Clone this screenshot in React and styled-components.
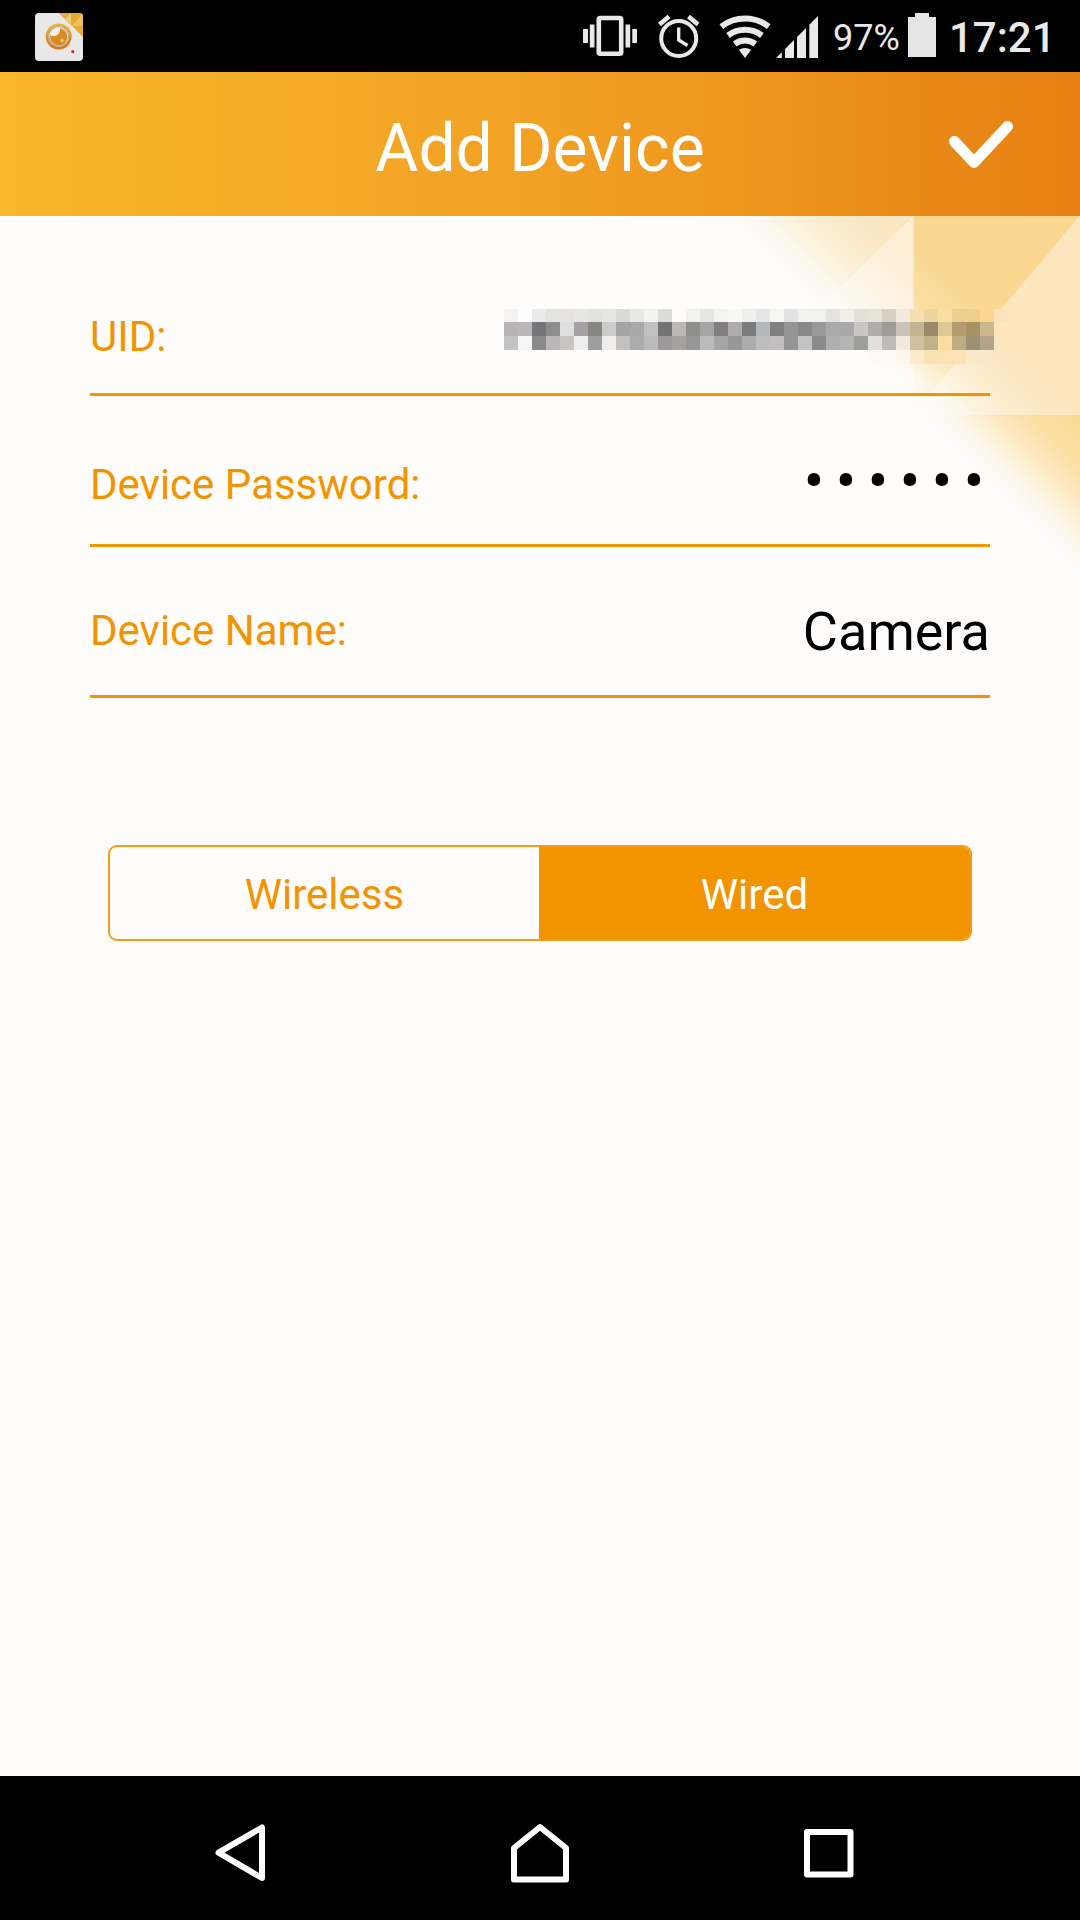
import React, { useState } from "react"
import styled, { createGlobalStyle } from "styled-components"

const GlobalStyle = createGlobalStyle`
  * {
    box-sizing: border-box;
  }
  body {
    margin: 0;
    background: #000;
    font-family: Roboto, "Liberation Sans", sans-serif;
  }
`

// censored uid, one row of colors per line of blocks
const uidBlocks = [
  "f4f3f2 fefefe e9eaea e3e3e2 e4e3e2 e6e6e4 e3e2e0 e6e6e4 dadad8 e8e8e7 f2f2f1 dcdcda fefdfb f2f2f1 e5e5e3 f3f3f1 f8f8f6 efefee e5e5e5 f6f6f5 e2e2e4 f2f2f0 f2f2f0 e5e3e1 f2ede7 e4dfd9 e9e2d8 d9d0c4 f3e9dd f4dfb3 eed59c f8dea4 eed08e eed08c fdd68f fae3b8",
  "b8b5b7 b9b7b9 757577 8f8c8e dedede a5a2a5 888683 cccccc a3a4a4 a9a9ab bfc0c0 757375 bab9b5 8f8e8b a5a5a5 817e80 aeabae 7a7b7d b6b7b8 827f82 959694 8b888b 989998 a9aaa9 a8a9a8 c8c7c1 b1aca7 a09b96 cbc4ba c4b38f 998a6b dec894 b39d6e aa9264 ccb88e",
  "c3c3c4 f6f6f7 8b898b b9b7b9 c7c6c4 efeeed 9d9e9f efeeed c1c0be aaabad bbbbba 9b999c a3a29f 989699 babab9 a4a5a6 989699 acacad bebcbf c0bec1 959593 c2c3c4 8c898c aeafae b4b4b3 9d9d9c e4dfda bebab5 f2e9df cfc0a1 c1b08a fbdca0 beab7e 9b9174 b1a488",
  "- - - - - - - - - - - - - - - - - - - - - - - - - - fffaf5 fffaf3 fef7ee fbeacb fae1b0 fce2b1 fbe3b5 fbe9c8 fbe8c9",
].map((row) => row.split(" "))

const AppIcon = () => (
  <svg width="48" height="48" viewBox="0 0 48 48">
    <defs>
      <clipPath id="tile">
        <rect width="48" height="48" rx="4" />
      </clipPath>
      <linearGradient id="ring" x1="0" y1="0" x2="0" y2="1">
        <stop offset="0" stopColor="#efb12c" />
        <stop offset="1" stopColor="#d9731d" />
      </linearGradient>
    </defs>
    <g clipPath="url(#tile)">
      <rect width="48" height="48" fill="#e9e8e8" />
      <path d="M24 0H48V24Z" fill="#e8ab2c" />
      <path d="M24 0H36V12Z" fill="#dfac4a" />
      <path d="M36 0V12L30 6Z" fill="#edca83" />
      <path d="M48 0V13H37Z" fill="#ecc069" />
    </g>
    <circle cx="23.7" cy="23.5" r="11.7" fill="#f2f2f2" stroke="url(#ring)" strokeWidth="2.6" />
    <circle cx="23.7" cy="23.3" r="9.8" fill="none" stroke="#a9a9a6" strokeWidth="1.2" />
    <circle cx="23.7" cy="23.6" r="8.6" fill="#dc8a1d" />
    <path d="M15.5 21C16 17 20 14.5 25 15C26 20 22 24 16 23Z" fill="#f4f1ec" />
    <circle cx="27" cy="27.5" r="1.8" fill="#edbd7a" />
    <circle cx="37.8" cy="38.7" r="1.6" fill="#d8262c" />
  </svg>
)

const VibrateIcon = () => (
  <svg width="54" height="42" viewBox="0 0 54 42" fill="#e9e9e9">
    <rect x="0" y="14" width="5" height="14" />
    <rect x="6.8" y="9.5" width="4.7" height="23" />
    <rect x="42.5" y="9.5" width="4.7" height="23" />
    <rect x="49.3" y="14" width="4.7" height="14" />
    <rect x="15.8" y="3" width="22.4" height="35.8" rx="1.5" fill="none" stroke="#e9e9e9" strokeWidth="4.6" />
  </svg>
)

const AlarmIcon = () => (
  <svg width="42" height="44" viewBox="0 0 42 44" fill="none" stroke="#e9e9e9">
    <circle cx="20.7" cy="24.5" r="17.5" strokeWidth="4" />
    <path d="M20.7 13.5V26L29.5 31.5" strokeWidth="3.4" />
    <path d="M1.5 10.5L11 2.5M30.5 2.5L40 10.5" strokeWidth="4.6" />
  </svg>
)

const WifiIcon = () => (
  <svg width="52" height="44" viewBox="0 0 52 44" fill="none" stroke="#e9e9e9" strokeWidth="6">
    <path d="M2.3 12.6A38.8 38.8 0 0 1 49.7 12.6" />
    <path d="M9.1 21.5A27.8 27.8 0 0 1 42.9 21.5" />
    <path d="M15.7 30A17 17 0 0 1 36.3 30" />
    <path d="M26 44L19.9 36A10 10 0 0 1 32.1 36Z" fill="#e9e9e9" stroke="none" />
  </svg>
)

const SignalIcon = () => (
  <svg width="42" height="42" viewBox="0 0 42 42" fill="#e9e9e9">
    <path d="M0 42L5.8 36.2V42ZM9 42V33L18 24V42ZM21 42V21L30 12V42ZM33.3 42V8.7L42 0V42Z" />
  </svg>
)

const BatteryIcon = () => (
  <svg width="28" height="44" viewBox="0 0 28 44" fill="#e5e5e5">
    <path d="M7 0H21V4H28V44H0V4H7Z" />
  </svg>
)

const Corner = () => (
  <CornerArt width="380" height="384" viewBox="0 0 380 384">
    <defs>
      <linearGradient id="fade" gradientUnits="userSpaceOnUse" x1="20" y1="0" x2="102" y2="-82">
        <stop offset="0" stopColor="#fff" stopOpacity="0" />
        <stop offset="0.2" stopColor="#fff" stopOpacity="0.16" />
        <stop offset="0.45" stopColor="#fff" stopOpacity="0.55" />
        <stop offset="0.7" stopColor="#fff" stopOpacity="0.85" />
        <stop offset="1" stopColor="#fff" />
      </linearGradient>
      <mask id="corner-mask" maskUnits="userSpaceOnUse" x="0" y="0" width="380" height="384">
        <rect width="380" height="384" fill="url(#fade)" />
      </mask>
    </defs>
    <g mask="url(#corner-mask)">
      <path d="M0 0H213.5L100 112Z" fill="#fae6bf" />
      <path d="M213.5 0V200H13Z" fill="#fdeed5" />
      <path d="M213.5 0H380L213.5 198Z" fill="#fad892" />
      <path d="M380 0V199H213L213.5 198Z" fill="#fbe6bd" />
      <path d="M180 199H380V384Z" fill="#fad890" />
    </g>
  </CornerArt>
)

const UidMosaic = () => (
  <Mosaic width="504" height="55" viewBox="0 0 504 55" shapeRendering="crispEdges">
    {uidBlocks.map((row, y) =>
      row.map((color, x) =>
        color === "-" ? null : (
          <rect
            key={`${x}-${y}`}
            x={x * 14}
            y={y === 0 ? 0 : y * 14 - 1}
            width="14"
            height={y === 0 ? 13 : 14}
            fill={`#${color}`}
          />
        )
      )
    )}
  </Mosaic>
)

const App = () => {
  const [mode, setMode] = useState("Wired")

  return (
    <Screen>
      <GlobalStyle />
      <StatusBar>
        <AppIcon />
        <StatusIcons>
          <VibrateIcon />
          <AlarmIcon />
          <WifiIcon />
          <SignalIcon />
          <Percent>97%</Percent>
          <BatteryIcon />
          <Clock>17:21</Clock>
        </StatusIcons>
      </StatusBar>

      <Header>
        <span />
        <Title>Add Device</Title>
        <Confirm aria-label="Confirm">
          <svg width="64" height="50" viewBox="0 0 64 50">
            <path
              d="M5.5 21.5L25 42.5L58.5 6.5"
              fill="none"
              stroke="#fff"
              strokeWidth="11"
              strokeLinecap="round"
              strokeLinejoin="round"
            />
          </svg>
        </Confirm>
      </Header>

      <Content>
        <Corner />
        <Form>
          <Row $height={180} $bottom={31}>
            <Label>UID:</Label>
            <UidMosaic />
          </Row>
          <Row $height={151} $bottom={34}>
            <Label>Device Password:</Label>
            <Password>••••••</Password>
          </Row>
          <Row $height={151} $bottom={39}>
            <Label>Device Name:</Label>
            <Value>Camera</Value>
          </Row>
        </Form>
        <Toggle>
          {["Wireless", "Wired"].map((item) => (
            <ToggleButton
              key={item}
              $active={mode === item}
              onClick={() => setMode(item)}
            >
              {item}
            </ToggleButton>
          ))}
        </Toggle>
      </Content>

      <NavBar>
        <svg width="50" height="58" viewBox="0 0 50 58">
          <path d="M47 3.5V54L3.5 28.7Z" />
        </svg>
        <svg width="58" height="60" viewBox="0 0 58 60">
          <path d="M3 56.5V25L29 4L55 25V56.5Z" />
        </svg>
        <svg width="50" height="49" viewBox="0 0 50 49">
          <rect x="3" y="3" width="43.5" height="42.5" />
        </svg>
      </NavBar>
    </Screen>
  )
}

const Screen = styled.div`
  display: flex;
  flex-direction: column;
  width: 1080px;
  height: 1920px;
  overflow: hidden;
`

const StatusBar = styled.div`
  display: flex;
  justify-content: space-between;
  height: 72px;
  padding: 13px 30px 0 35px;
  background: #000;
  color: #e9e9e9;
`

const StatusIcons = styled.div`
  display: flex;
  align-items: flex-start;

  svg {
    flex: none;
  }
  svg:nth-of-type(1) {
    margin: 2px 21px 0 0;
  }
  svg:nth-of-type(2) {
    margin: 1px 19px 0 0;
  }
  svg:nth-of-type(3) {
    margin: 1px 5px 0 0;
  }
  svg:nth-of-type(4) {
    margin: 3px 0 0;
  }
`

const Percent = styled.span`
  width: 90px;
  padding-left: 15px;
  font-size: 36px;
  line-height: 50px;
`

const Clock = styled.span`
  width: 114px;
  padding-left: 13px;
  font-size: 42px;
  font-weight: 500;
  line-height: 49px;
`

const Header = styled.header`
  display: grid;
  grid-template-columns: 180px 1fr 180px;
  align-items: center;
  height: 144px;
  background: linear-gradient(90deg, #f9b62c, #f4a927 31%, #ee981e 68%, #e98916 85%, #e88113);
`

const Title = styled.h1`
  margin: 0;
  padding-top: 9px;
  color: #fff;
  font-size: 66px;
  font-weight: 400;
  line-height: 78px;
  text-align: center;
`

const Confirm = styled.button`
  display: flex;
  width: 64px;
  margin-left: 49px;
  padding: 1px 0 0;
  border: 0;
  background: none;
`

const Content = styled.main`
  position: relative;
  flex: 1;
  background: #fefdfc;
`

const CornerArt = styled.svg`
  position: absolute;
  top: 0;
  right: 0;
`

const Form = styled.div`
  position: relative;
  padding: 0 90px;
`

const Row = styled.div`
  display: flex;
  align-items: flex-end;
  justify-content: space-between;
  height: ${(props) => props.$height}px;
  padding-bottom: ${(props) => props.$bottom}px;
  border-bottom: 3px solid #f29400;
`

const Label = styled.span`
  color: #f29400;
  font-size: 42px;
  line-height: 50px;
`

const Value = styled.span`
  margin-bottom: -1px;
  color: #000;
  font-size: 54px;
  line-height: 50px;
`

const Password = styled(Value)`
  margin: 0 -5.5px 4px 0;
  font-size: 62px;
  letter-spacing: 11.1px;
`

const Mosaic = styled.svg`
  margin: 0 -18px -2px 0;
`

const Toggle = styled.div`
  display: flex;
  height: 96px;
  margin: 147px 108px 0;
  overflow: hidden;
  border: 2px solid #f29d1a;
  border-radius: 9px;
`

const ToggleButton = styled.button`
  flex: 1;
  padding: 2px 0 0;
  border: 0;
  background: ${(props) => (props.$active ? "#f29400" : "transparent")};
  color: ${(props) => (props.$active ? "#fff" : "#f29400")};
  font-family: inherit;
  font-size: 42px;

  &:first-child {
    flex: 0 0 429px;
  }
`

const NavBar = styled.nav`
  display: grid;
  grid-template-columns: 296px 293px 50px;
  align-items: center;
  height: 144px;
  padding: 10px 0 0 215px;
  background: #000;

  svg {
    fill: none;
    stroke: #fff;
    stroke-width: 6;
    stroke-linejoin: round;
  }
`

export default App
